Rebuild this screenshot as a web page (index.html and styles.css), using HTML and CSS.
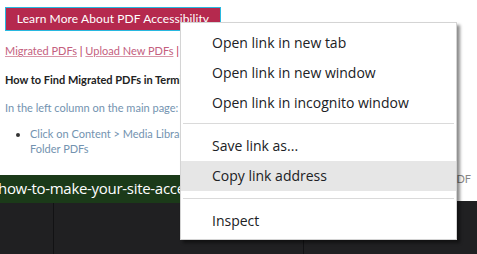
FILE: index.html
```html
<!DOCTYPE html>
<html>
<head>
<meta charset="utf-8">
<link rel="stylesheet" href="styles.css">
</head>
<body>
<div class="page">
  <div class="content">
    <a class="btn" href="#">Learn More About PDF Accessibility</a>
    <p class="links"><a href="#">Migrated PDFs</a> | <a href="#">Upload New PDFs</a> | <a href="#">Link Library Guide</a></p>
    <p class="heading">How to Find Migrated PDFs in Terminalfour Media Library</p>
    <p class="intro">In the left column on the main page:</p>
    <ul class="steps">
      <li>Click on Content &gt; Media Library: select the category named Migrated File Type<br>Folder PDFs</li>
    </ul>
    <p class="tail">Migrated PDF</p>
  </div>
  <div class="footer">
    <div class="col"></div>
    <div class="col"></div>
    <div class="col"></div>
  </div>
  <div class="status">how-to-make-your-site-accessible/migrated-pdfs</div>
</div>
<div class="menu">
  <div class="item">Open link in new tab</div>
  <div class="item">Open link in new window</div>
  <div class="item">Open link in incognito window</div>
  <div class="sep"></div>
  <div class="item">Save link as...</div>
  <div class="item active">Copy link address</div>
  <div class="sep sep-low"></div>
  <div class="item">Inspect</div>
</div>
</body>
</html>
```

FILE: styles.css
```css
html, body {
  margin: 0;
  padding: 0;
  width: 477px;
  height: 254px;
  overflow: hidden;
  background: #202022;
}
.page {
  position: relative;
  width: 477px;
  height: 254px;
  display: flex;
  flex-direction: column;
}
.content {
  background: #fff;
  height: 194px;
  padding: 7px 0 0 5px;
  font-family: "Lato", "Open Sans", sans-serif;
  font-size: 11px;
  line-height: 14px;
  overflow: hidden;
}
.btn {
  display: block;
  box-sizing: border-box;
  width: 216px;
  height: 24px;
  line-height: 22px;
  background: #b5294e;
  border: 1px solid #28b8e0;
  color: #fff;
  font-size: 12px;
  letter-spacing: 0.1px;
  text-align: center;
  text-decoration: none;
  white-space: nowrap;
}
.links {
  margin: 13px 0 0;
  color: #b5294e;
  white-space: nowrap;
}
.links a {
  color: #c4607e;
  text-decoration: underline;
  text-decoration-color: #d896a8;
}
.heading {
  margin: 15px 0 0;
  font-weight: bold;
  color: #222;
  white-space: nowrap;
}
.intro {
  margin: 14px 0 0;
  color: #7393b0;
  white-space: nowrap;
}
.steps {
  margin: 11px 0 0;
  padding-left: 25px;
  color: #7393b0;
  line-height: 15px;
  white-space: nowrap;
}
.steps li::marker {
  color: #333;
}
.tail {
  margin: 16px 0 0;
  color: #888;
  text-align: right;
  padding-right: 6px;
}
.footer {
  flex: 1;
  display: grid;
  grid-template-columns: 54px 250px 1fr;
  background: #202022;
}
.col {
  border-right: 1px solid #121214;
}
.col:last-child {
  border-right: none;
}
.status {
  position: absolute;
  left: 0;
  top: 175px;
  width: 300px;
  height: 28px;
  background: #1b3a19;
  color: #fff;
  font-family: "Open Sans", sans-serif;
  font-size: 15px;
  letter-spacing: -0.3px;
  line-height: 27px;
  white-space: nowrap;
  overflow: hidden;
  text-indent: -2px;
}
.menu {
  position: absolute;
  left: 180px;
  top: 22px;
  width: 275px;
  box-sizing: content-box;
  background: #fff;
  border: 1px solid #d4d4d4;
  box-shadow: 3px 3px 3px rgba(0, 0, 0, 0.45);
  padding: 5px 0 3px;
  font-family: "Open Sans", sans-serif;
  font-size: 14px;
  color: #202124;
}
.item {
  height: 30px;
  line-height: 29px;
  padding-left: 31px;
}
.item.active {
  background: #e6e6e6;
}
.sep {
  height: 1px;
  margin: 5px 2px 7px;
  background: #dadada;
}
.sep-low {
  margin: 7px 2px 7px;
}
```
